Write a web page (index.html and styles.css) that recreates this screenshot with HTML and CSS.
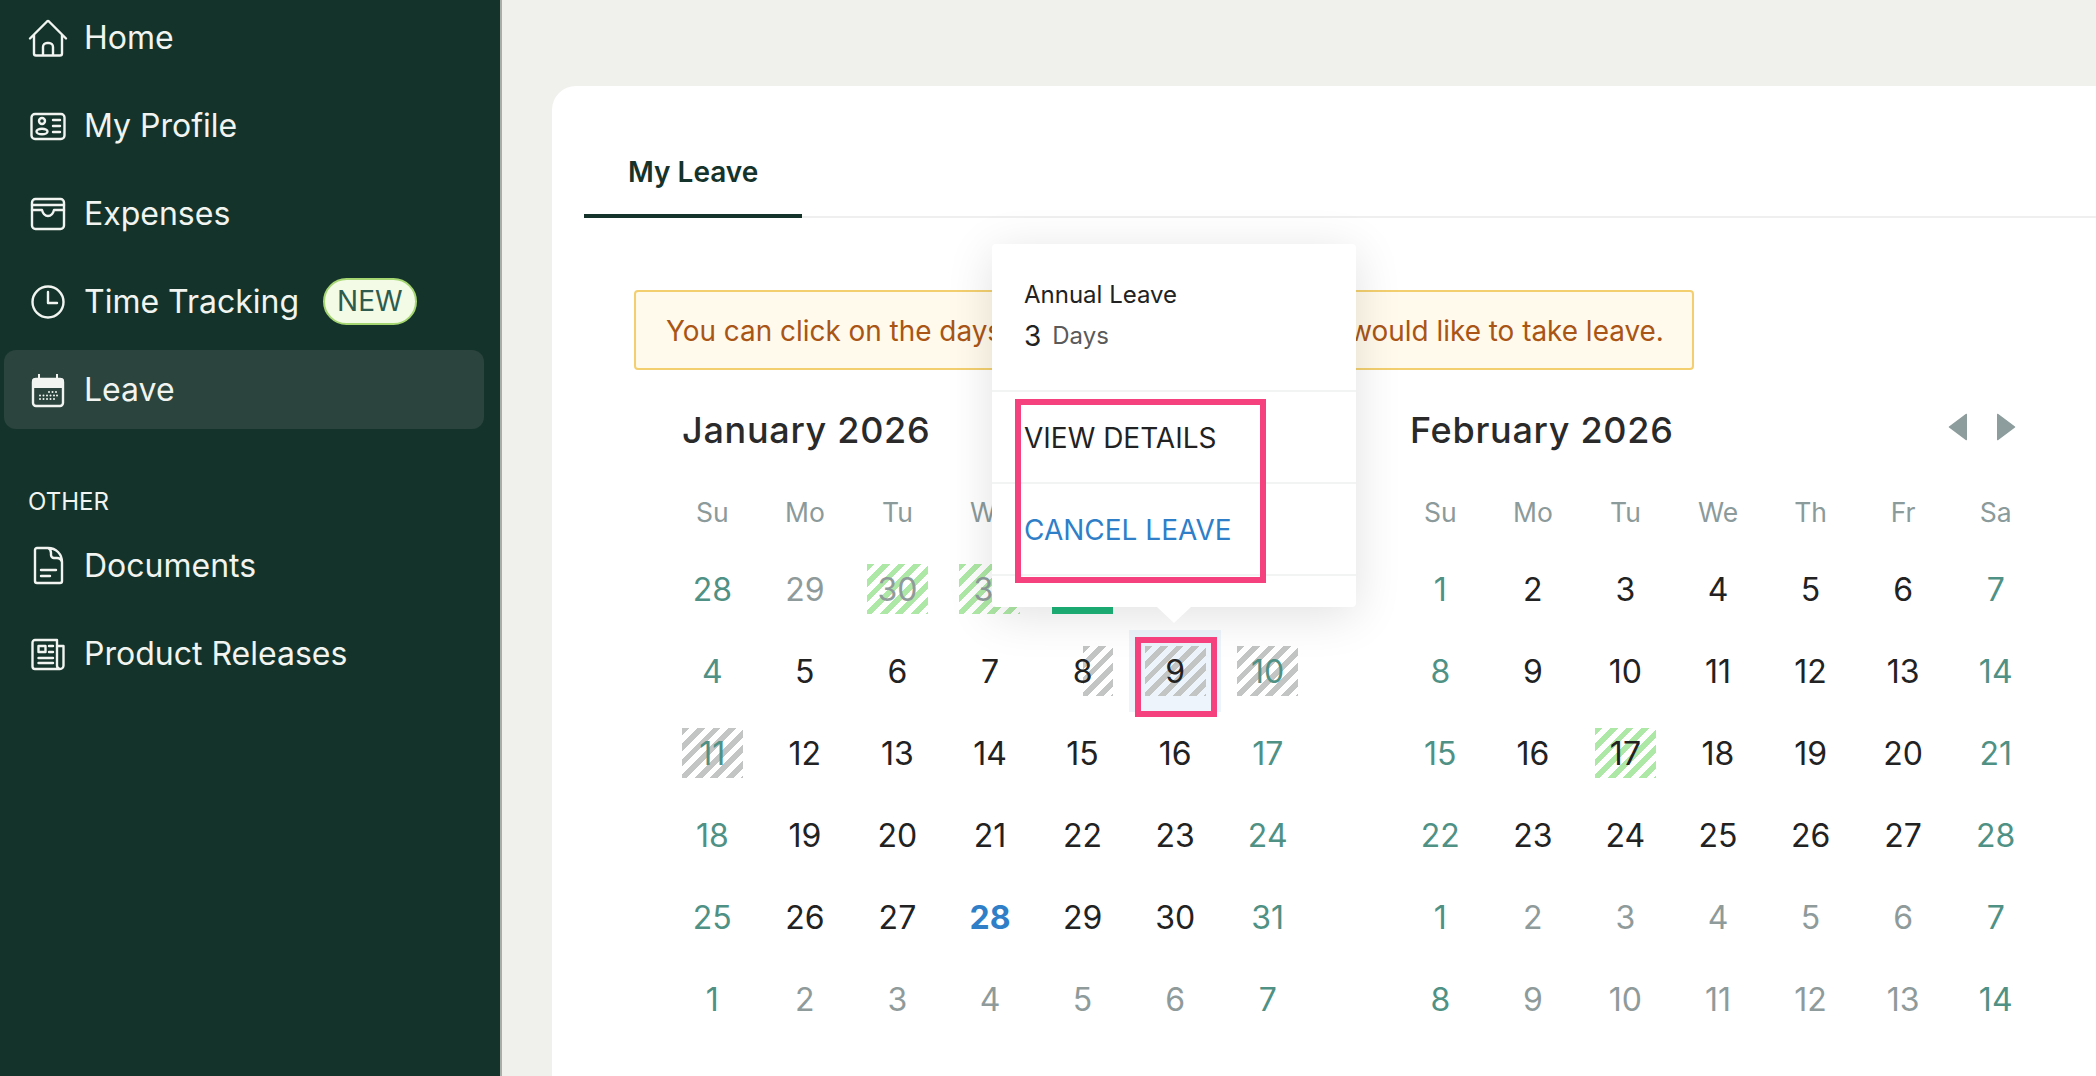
FILE: index.html
```html
<!DOCTYPE html>
<html>
<head>
    <link rel="stylesheet" href="styles.css">
</head>
<body>
    <aside class="sidebar">
        <nav class="side-nav">
            <a class="nav-item">
                <svg class="nav-icon" viewBox="0 0 40 40"><path d="M2 21.500 19 4.500a1.500 1.500 0 0 1 2 0L38 21.500M6 18v18.500a2 2 0 0 0 2 2h24a2 2 0 0 0 2-2V18M15 38.500V30a4 4 0 0 1 4-4h2a4 4 0 0 1 4 4v8.500"/></svg>
                Home
            </a>
            <a class="nav-item">
                <svg class="nav-icon" viewBox="0 0 40 40"><rect x="3.500" y="9" width="33" height="25" rx="3.500"/><circle cx="14" cy="16" r="3"/><ellipse cx="14" cy="26.500" rx="5.500" ry="2.800"/><path d="M25 15h7M25 21h7M25 27h7"/></svg>
                My Profile
            </a>
            <a class="nav-item">
                <svg class="nav-icon" viewBox="0 0 40 40"><rect x="4" y="6" width="32" height="30" rx="3.500"/><path d="M4 12h32M4 17h10c1 4 3 6 6 6s5-2 6-6h10"/></svg>
                Expenses
            </a>
            <a class="nav-item">
                <svg class="nav-icon" viewBox="0 0 40 40"><circle cx="20" cy="21" r="15.500"/><path d="M20 11v11h9"/></svg>
                Time Tracking
                <span class="badge-new">NEW</span>
            </a>
            <a class="nav-item active">
                <svg class="nav-icon" viewBox="0 0 40 40"><path class="solid" d="M7 8h3V4h2v4h16V4h2v4h3a3 3 0 0 1 3 3v7H4v-7a3 3 0 0 1 3-3Z"/><rect x="5" y="9" width="30" height="27" rx="3"/><path class="dots" d="M21 22h.01M24.500 22h.01M28 22h.01M12 25.500h.01M15.500 25.500h.01M19 25.500h.01M22.500 25.500h.01M26 25.500h.01M29 25.500h.01M12 29h.01M15.500 29h.01M19 29h.01M22.500 29h.01M26 29h.01"/></svg>
                Leave
            </a>
            <div class="nav-label">OTHER</div>
            <a class="nav-item">
                <svg class="nav-icon" viewBox="0 0 40 40"><path d="M9 3h11c8 0 14 6 14 14v19a2 2 0 0 1-2 2H9a2 2 0 0 1-2-2V5a2 2 0 0 1 2-2ZM20 3c2 1 3 3 3 5v2a3 3 0 0 0 3 3h3c2 0 4 1 5 4M13 25h15M13 31h9"/></svg>
                Documents
            </a>
            <a class="nav-item">
                <svg class="nav-icon" viewBox="0 0 40 40"><path d="M29 7H7a2.500 2.500 0 0 0-2.500 2.500v24A2.500 2.500 0 0 0 7 36h25a3.500 3.500 0 0 0 3.500-3.500V13H29ZM29 7v25.500a3.500 3.500 0 0 0 3 3.500M10.500 13h7v6h-7ZM21 13h4M21 19h4M10.500 25H25M10.500 30H25"/></svg>
                Product Releases
            </a>
        </nav>
    </aside>

    <main class="content">
        <section class="card">
            <div class="tabs">
                <div class="tab">My Leave</div>
            </div>

            <div class="alert">You can click on the days in the calendar when you would like to take leave.</div>

            <div class="calendars">
                <div class="month">
                    <div class="month-head"><h2 class="month-title">January 2026</h2></div>
                    <div class="week-row">
                        <span>Su</span><span>Mo</span><span>Tu</span><span>We</span><span>Th</span><span>Fr</span><span>Sa</span>
                    </div>
                    <div class="days">
                        <div class="day weekend"><span>28</span></div>
                        <div class="day muted"><span>29</span></div>
                        <div class="day muted"><span class="approved">30</span></div>
                        <div class="day muted"><span class="approved">31</span></div>
                        <div class="day"><span class="holiday">1</span></div>
                        <div class="day"><span>2</span></div>
                        <div class="day weekend"><span>3</span></div>

                        <div class="day weekend"><span>4</span></div>
                        <div class="day"><span>5</span></div>
                        <div class="day"><span>6</span></div>
                        <div class="day"><span>7</span></div>
                        <div class="day"><span class="pending half">8</span></div>
                        <div class="day selected"><span class="pending">9</span></div>
                        <div class="day weekend"><span class="pending">10</span></div>

                        <div class="day weekend"><span class="pending">11</span></div>
                        <div class="day"><span>12</span></div>
                        <div class="day"><span>13</span></div>
                        <div class="day"><span>14</span></div>
                        <div class="day"><span>15</span></div>
                        <div class="day"><span>16</span></div>
                        <div class="day weekend"><span>17</span></div>

                        <div class="day weekend"><span>18</span></div>
                        <div class="day"><span>19</span></div>
                        <div class="day"><span>20</span></div>
                        <div class="day"><span>21</span></div>
                        <div class="day"><span>22</span></div>
                        <div class="day"><span>23</span></div>
                        <div class="day weekend"><span>24</span></div>

                        <div class="day weekend"><span>25</span></div>
                        <div class="day"><span>26</span></div>
                        <div class="day"><span>27</span></div>
                        <div class="day today"><span>28</span></div>
                        <div class="day"><span>29</span></div>
                        <div class="day"><span>30</span></div>
                        <div class="day weekend"><span>31</span></div>

                        <div class="day weekend"><span>1</span></div>
                        <div class="day muted"><span>2</span></div>
                        <div class="day muted"><span>3</span></div>
                        <div class="day muted"><span>4</span></div>
                        <div class="day muted"><span>5</span></div>
                        <div class="day muted"><span>6</span></div>
                        <div class="day weekend"><span>7</span></div>
                    </div>
                </div>

                <div class="month">
                    <div class="month-head">
                        <h2 class="month-title">February 2026</h2>
                        <div class="month-nav">
                            <svg viewBox="0 0 20 28"><path d="M19 1.500v25a.8.8 0 0 1-1.300.6L1 14.600a.8.8 0 0 1 0-1.200L17.700.9a.8.8 0 0 1 1.300.6Z"/></svg>
                            <svg viewBox="0 0 20 28"><path d="M1 1.500v25a.8.8 0 0 0 1.300.6L19 14.600a.8.8 0 0 0 0-1.200L2.300.9A.8.8 0 0 0 1 1.500Z"/></svg>
                        </div>
                    </div>
                    <div class="week-row">
                        <span>Su</span><span>Mo</span><span>Tu</span><span>We</span><span>Th</span><span>Fr</span><span>Sa</span>
                    </div>
                    <div class="days">
                        <div class="day weekend"><span>1</span></div>
                        <div class="day"><span>2</span></div>
                        <div class="day"><span>3</span></div>
                        <div class="day"><span>4</span></div>
                        <div class="day"><span>5</span></div>
                        <div class="day"><span>6</span></div>
                        <div class="day weekend"><span>7</span></div>

                        <div class="day weekend"><span>8</span></div>
                        <div class="day"><span>9</span></div>
                        <div class="day"><span>10</span></div>
                        <div class="day"><span>11</span></div>
                        <div class="day"><span>12</span></div>
                        <div class="day"><span>13</span></div>
                        <div class="day weekend"><span>14</span></div>

                        <div class="day weekend"><span>15</span></div>
                        <div class="day"><span>16</span></div>
                        <div class="day"><span class="approved">17</span></div>
                        <div class="day"><span>18</span></div>
                        <div class="day"><span>19</span></div>
                        <div class="day"><span>20</span></div>
                        <div class="day weekend"><span>21</span></div>

                        <div class="day weekend"><span>22</span></div>
                        <div class="day"><span>23</span></div>
                        <div class="day"><span>24</span></div>
                        <div class="day"><span>25</span></div>
                        <div class="day"><span>26</span></div>
                        <div class="day"><span>27</span></div>
                        <div class="day weekend"><span>28</span></div>

                        <div class="day weekend"><span>1</span></div>
                        <div class="day muted"><span>2</span></div>
                        <div class="day muted"><span>3</span></div>
                        <div class="day muted"><span>4</span></div>
                        <div class="day muted"><span>5</span></div>
                        <div class="day muted"><span>6</span></div>
                        <div class="day weekend"><span>7</span></div>

                        <div class="day weekend"><span>8</span></div>
                        <div class="day muted"><span>9</span></div>
                        <div class="day muted"><span>10</span></div>
                        <div class="day muted"><span>11</span></div>
                        <div class="day muted"><span>12</span></div>
                        <div class="day muted"><span>13</span></div>
                        <div class="day weekend"><span>14</span></div>
                    </div>
                </div>
            </div>

            <!-- popover over the selected day -->
            <div class="popover">
                <div class="popover-head">
                    <div class="popover-type">Annual Leave</div>
                    <div class="popover-count"><b>3</b> Days</div>
                </div>
                <div class="popover-row">VIEW DETAILS</div>
                <div class="popover-row link">CANCEL LEAVE</div>
                <div class="popover-arrow"></div>
            </div>

            <!-- pink annotation boxes -->
            <div class="mark mark-menu"></div>
            <div class="mark mark-day"></div>
        </section>
    </main>
</body>
</html>
```

FILE: styles.css
```css
* {
    box-sizing: border-box;
}
html, body {
    height: 100%;
}
body {
    margin: 0;
    display: flex;
    overflow: hidden;
    font-family: Inter, "Liberation Sans", sans-serif;
    color: #222;
    background-color: #f0f1ed;
}

/* sidebar */
.sidebar {
    width: 502px;
    flex-shrink: 0;
    background-color: #14342b;
    border-right: 2px solid #a9aea9;
    color: #f1f4f0;
}
.side-nav {
    margin-top: -3px;
    padding: 0 16px 0 4px;
}
.nav-item {
    display: flex;
    align-items: center;
    height: 80px;
    margin-bottom: 8px;
    padding-left: 24px;
    border-radius: 12px;
    font-size: 32px;
    white-space: nowrap;
}
.nav-item.active {
    height: 79px;
    margin-top: 9px;
    background-color: #2b443d;
}
.nav-icon {
    width: 40px;
    height: 40px;
    margin-right: 16px;
    flex-shrink: 0;
    fill: none;
    stroke: #f1f4f0;
    stroke-width: 2.400;
    stroke-linecap: round;
    stroke-linejoin: round;
}
.nav-icon .solid {
    fill: #f1f4f0;
    stroke: none;
}
.nav-icon .dots {
    stroke-width: 2;
}
.nav-label {
    margin: 58px 0 8px;
    padding-left: 24px;
    font-size: 24px;
    line-height: 30px;
}
.badge-new {
    margin-left: 24px;
    padding: 0 12px;
    height: 47px;
    line-height: 43px;
    border: 2px solid #a6d672;
    border-radius: 24px;
    background-color: #f3fbe6;
    color: #2f5a4e;
    font-size: 28px;
}

/* main card */
.content {
    flex: 1;
    padding: 86px 0 0 50px;
}
.card {
    position: relative;
    height: 100%;
    background-color: #fff;
    border-radius: 24px 0 0 0;
}
.tabs {
    margin-left: 32px;
    border-bottom: 2px solid #efefef;
}
.tab {
    width: 218px;
    margin-bottom: -2px;
    padding: 68px 0 24px 44px;
    border-bottom: 4px solid #15332b;
    color: #15332b;
    font-size: 28px;
    font-weight: 600;
    line-height: 36px;
}
.alert {
    width: 1060px;
    height: 80px;
    margin: 72px 0 0 82px;
    padding-left: 30px;
    border: 2px solid #f3cf6f;
    border-radius: 4px;
    background-color: #fffaeb;
    color: #a95516;
    font-size: 27.900px;
    line-height: 78px;
}

/* calendars */
.calendars {
    display: flex;
    gap: 80px;
    margin: 30px 0 0 114px;
}
.month {
    width: 648px;
}
.month-head {
    display: flex;
    justify-content: space-between;
    align-items: center;
    height: 60px;
    margin-bottom: 16px;
    padding: 0 26px 0 16px;
}
.month-title {
    margin: 0;
    font-size: 36px;
    font-weight: 500;
    color: #2a2a2a;
    letter-spacing: 0.7px;
}
.month-nav {
    display: flex;
    gap: 28px;
    margin-bottom: 7px;
}
.month-nav svg {
    width: 20px;
    height: 28px;
    fill: #8d9c9c;
}
.week-row {
    display: grid;
    grid-template-columns: repeat(7, 1fr);
    height: 72px;
    align-items: center;
    text-align: center;
    color: #8b9a9a;
    font-size: 26.500px;
}
.days {
    display: grid;
    grid-template-columns: repeat(7, 1fr);
    grid-auto-rows: 82px;
}
.day {
    display: flex;
    justify-content: center;
    align-items: center;
    font-size: 32px;
    color: #222;
}
.day span {
    display: block;
    width: 61px;
    height: 50px;
    line-height: 51px;
    text-align: center;
}
.day.weekend {
    color: #4f9184;
}
.day.muted {
    color: #8f9b9b;
}
.day.today {
    color: #2f7fc8;
    font-weight: 700;
}
.day.selected {
    background-color: #eef4fb;
}
.approved {
    background-image: repeating-linear-gradient(135deg, #aee8a6 0 5.500px, #fff 5.500px 11px);
}
.pending {
    background-image: repeating-linear-gradient(135deg, #c3c5c5 0 5.500px, transparent 5.500px 11px);
}
.pending.half {
    background-size: 50% 100%;
    background-position: right top;
    background-repeat: no-repeat;
}
.holiday {
    background-color: #1eb67a;
}

/* popover */
.popover {
    position: absolute;
    left: 440px;
    top: 158px;
    width: 364px;
    height: 363px;
    border-radius: 4px;
    background-color: #fff;
    box-shadow: 0 8px 48px rgba(0, 0, 0, 0.12);
}
.popover-head {
    height: 148px;
    padding: 34px 0 0 32px;
    border-bottom: 2px solid #f2f3f3;
}
.popover-type {
    font-size: 24px;
    line-height: 34px;
}
.popover-count {
    display: flex;
    align-items: center;
    gap: 11px;
    margin-top: 6px;
    font-size: 24px;
    line-height: 36px;
    color: #5a5a5a;
}
.popover-count b {
    font-size: 28px;
    font-weight: 400;
    color: #222;
}
.popover-row {
    height: 92px;
    padding-left: 32px;
    border-bottom: 2px solid #f2f3f3;
    font-size: 28px;
    line-height: 93px;
}
.popover-row.link {
    color: #2f7fc8;
}
.popover-arrow {
    position: absolute;
    left: 165px;
    top: 100%;
    width: 34px;
    height: 16px;
    background-color: #fff;
    clip-path: polygon(0 0, 100% 0, 50% 100%);
}

/* annotation boxes */
.mark {
    position: absolute;
    border: 6px solid #f5427f;
}
.mark-menu {
    left: 463px;
    top: 313px;
    width: 251px;
    height: 184px;
}
.mark-day {
    left: 583px;
    top: 551px;
    width: 82px;
    height: 80px;
}
```
